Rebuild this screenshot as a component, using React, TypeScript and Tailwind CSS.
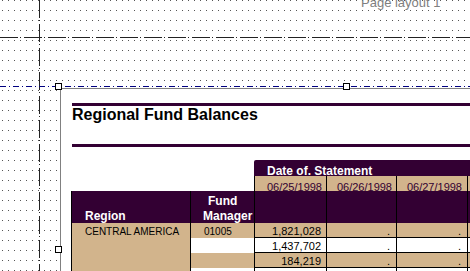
import React from "react";

// designer canvas: dotted grid + guide lines
const Guides = () => {
  return (
    <svg className="absolute inset-0" width={470} height={271}>
      <defs>
        <pattern id="dots" width="6" height="10" x="2" y="0" patternUnits="userSpaceOnUse">
          <rect x="0" y="0" width="1" height="1" fill="#555" />
        </pattern>
      </defs>
      <rect x="0" y="0" width="470" height="271" fill="url(#dots)" />
      <line x1="0" y1="37.5" x2="470" y2="37.5" stroke="#222" strokeDasharray="18 2 1 3" />
      <line x1="39.5" y1="0" x2="39.5" y2="271" stroke="#222" strokeDasharray="18 2 1 3" />
      <line x1="0" y1="86.5" x2="470" y2="86.5" stroke="#000080" strokeDasharray="6 3 1 3" />
    </svg>
  );
};

const Handle = ({ className }: { className: string }) => {
  return <div className={"absolute h-[7px] w-[7px] border border-black bg-white " + className} />;
};

const dates = ["06/25/1998", "06/26/1998", "06/27/1998", "06/28/1998"];

const rows = [
  { fund: "01005", value: "1,821,028", tan: true },
  { fund: "", value: "1,437,702", tan: false },
  { fund: "", value: "184,219", tan: true },
  { fund: "", value: "", tan: false },
];

const App = () => {
  return (
    <div className="relative flex h-[271px] w-[470px] flex-col overflow-hidden bg-white font-['Liberation_Sans',Arial,sans-serif]">
      <Guides />

      <div className="relative h-[88px] shrink-0">
        <p className="-mt-[5px] ml-[361px] text-[13px] leading-[15px] text-[#808080]">Page layout 1</p>
      </div>

      {/* report page */}
      <div className="relative ml-[60px] flex-1 overflow-hidden border-l border-t border-[#808080] bg-white">
        <div className="ml-[11px] mt-[14px] h-[44px] border-y-[3px] border-[#330033]">
          <h1 className="text-[16px] font-bold leading-[18px] text-black">Regional Fund Balances</h1>
        </div>

        <div className="ml-[10px] mt-[13px] grid grid-cols-[120px_63px_73px_70px_71px_1fr] grid-rows-[16px_15px_32px_15px_15px_15px_15px] text-[11px] leading-none">
          {/* Date of. Statement */}
          <div className="col-span-4 col-start-3 rounded-tl-[2px] bg-[#330033] pl-[13px] pt-[5px] text-[12px] font-bold text-white">
            Date of. Statement
          </div>

          {/* dates */}
          {dates.map((d, i) => (
            <div
              key={d}
              className={
                "overflow-hidden whitespace-nowrap border-black bg-[#d2b48c] pt-[6px] text-right text-[#330033] " +
                (i === 0 ? "col-start-3 border-x pr-[4px]" : i === 3 ? "pl-[10px] text-left" : i === 2 ? "border-r pr-[5px]" : "border-r pr-[4px]")
              }
            >
              {d}
            </div>
          ))}

          {/* header row */}
          <div className="border-x border-black bg-[#330033] pl-[13px] pt-[18px] text-[12px] font-bold leading-[15px] text-white">
            Region
          </div>
          <div className="flex flex-col bg-[#330033] pt-[3px] text-[12px] font-bold leading-[15px] text-white">
            <span className="pl-[17px]">Fund</span>
            <span className="pl-[12px]">Manager</span>
          </div>
          <div className="border-x border-black bg-[#330033]" />
          <div className="border-r border-black bg-[#330033]" />
          <div className="border-r border-black bg-[#330033]" />
          <div className="bg-[#330033]" />

          {/* region (merged) */}
          <div className="col-start-1 row-span-4 row-start-4 border-x border-black bg-[#d2b48c] pl-[13px] pt-[4px] text-[10px] text-black">
            CENTRAL AMERICA
          </div>

          {rows.map((r, i) => (
            <React.Fragment key={i}>
              <div className={"col-start-2 pl-[13px] pt-[4px] text-[10px] text-black " + (r.tan ? "bg-[#d2b48c]" : "bg-white")}>
                {r.fund}
              </div>
              <div className={"border-x border-b border-black pr-[5px] pt-[3px] text-right text-black " + (r.tan ? "bg-[#d2b48c]" : "bg-white")}>
                {r.value}
              </div>
              <div className={"border-b border-r border-black pr-[6px] pt-[3px] text-right text-black " + (r.tan ? "bg-[#d2b48c]" : "bg-white")}>
                {r.value ? "." : ""}
              </div>
              <div className={"border-b border-r border-black pr-[6px] pt-[3px] text-right text-black " + (r.tan ? "bg-[#d2b48c]" : "bg-white")}>
                {r.value ? "." : ""}
              </div>
              <div className={"border-b border-black " + (r.tan ? "bg-[#d2b48c]" : "bg-white")} />
            </React.Fragment>
          ))}
        </div>
      </div>

      <Handle className="left-[55px] top-[83px]" />
      <Handle className="left-[343px] top-[83px]" />
      <Handle className="left-[55px] top-[246px]" />
    </div>
  );
};

export default App;
